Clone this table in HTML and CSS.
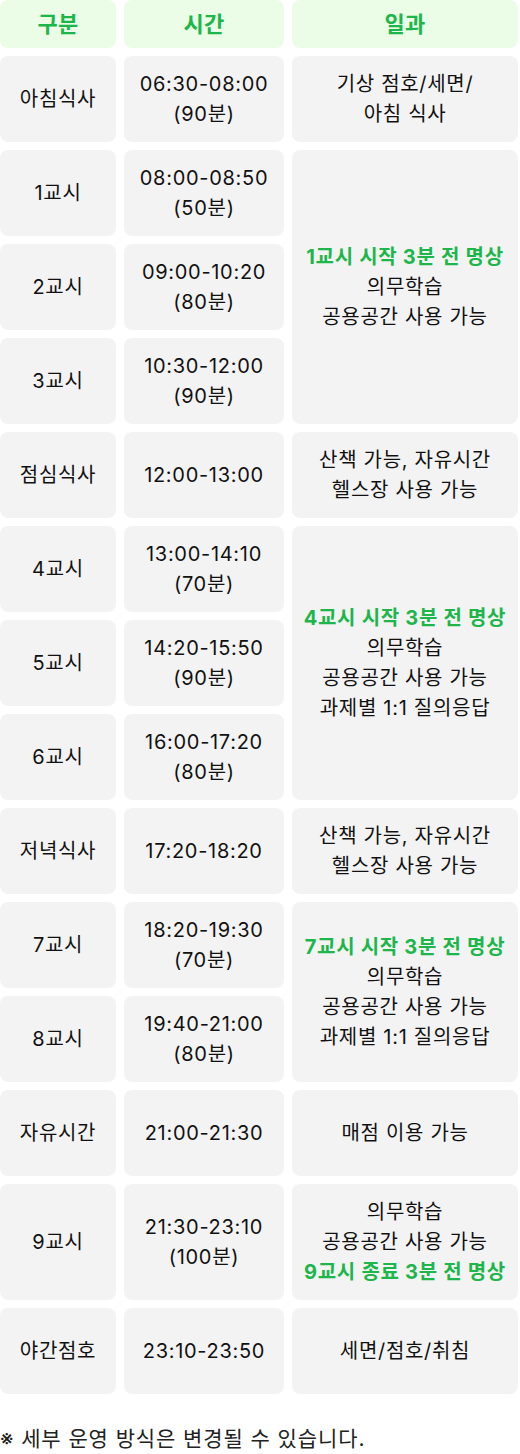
FILE: index.html
```html
<!DOCTYPE html>
<html lang="ko">
<head>
<meta charset="utf-8">
<link rel="stylesheet" href="styles.css">
</head>
<body>
<div class="table">
  <div class="cell head"><p>구분</p></div>
  <div class="cell head"><p>시간</p></div>
  <div class="cell head"><p>일과</p></div>

  <div class="cell"><p>아침식사</p></div>
  <div class="cell"><p>06:30-08:00<br>(90분)</p></div>
  <div class="cell"><p>기상 점호/세면/<br>아침 식사</p></div>

  <div class="cell"><p>1교시</p></div>
  <div class="cell"><p>08:00-08:50<br>(50분)</p></div>
  <div class="cell span3"><p><span class="hl">1교시 시작 3분 전 명상</span><br>의무학습<br>공용공간 사용 가능</p></div>

  <div class="cell"><p>2교시</p></div>
  <div class="cell"><p>09:00-10:20<br>(80분)</p></div>

  <div class="cell"><p>3교시</p></div>
  <div class="cell"><p>10:30-12:00<br>(90분)</p></div>

  <div class="cell"><p>점심식사</p></div>
  <div class="cell"><p>12:00-13:00</p></div>
  <div class="cell"><p>산책 가능, 자유시간<br>헬스장 사용 가능</p></div>

  <div class="cell"><p>4교시</p></div>
  <div class="cell"><p>13:00-14:10<br>(70분)</p></div>
  <div class="cell span3"><p><span class="hl">4교시 시작 3분 전 명상</span><br>의무학습<br>공용공간 사용 가능<br>과제별 1:1 질의응답</p></div>

  <div class="cell"><p>5교시</p></div>
  <div class="cell"><p>14:20-15:50<br>(90분)</p></div>

  <div class="cell"><p>6교시</p></div>
  <div class="cell"><p>16:00-17:20<br>(80분)</p></div>

  <div class="cell"><p>저녁식사</p></div>
  <div class="cell"><p>17:20-18:20</p></div>
  <div class="cell"><p>산책 가능, 자유시간<br>헬스장 사용 가능</p></div>

  <div class="cell"><p>7교시</p></div>
  <div class="cell"><p>18:20-19:30<br>(70분)</p></div>
  <div class="cell span2"><p><span class="hl">7교시 시작 3분 전 명상</span><br>의무학습<br>공용공간 사용 가능<br>과제별 1:1 질의응답</p></div>

  <div class="cell"><p>8교시</p></div>
  <div class="cell"><p>19:40-21:00<br>(80분)</p></div>

  <div class="cell"><p>자유시간</p></div>
  <div class="cell"><p>21:00-21:30</p></div>
  <div class="cell"><p>매점 이용 가능</p></div>

  <div class="cell"><p>9교시</p></div>
  <div class="cell"><p>21:30-23:10<br>(100분)</p></div>
  <div class="cell"><p>의무학습<br>공용공간 사용 가능<br><span class="hl">9교시 종료 3분 전 명상</span></p></div>

  <div class="cell"><p>야간점호</p></div>
  <div class="cell"><p>23:10-23:50</p></div>
  <div class="cell"><p>세면/점호/취침</p></div>
</div>
<p class="note">※ 세부 운영 방식은 변경될 수 있습니다.</p>
</body>
</html>
```

FILE: styles.css
```css
html, body {
  margin: 0;
  padding: 0;
  background: #ffffff;
}
body {
  font-family: Inter, "Noto Sans CJK KR", sans-serif;
  color: #111111;
  width: 518px;
}
.table {
  display: grid;
  grid-template-columns: 116px 160px 226px;
  grid-template-rows: 48px repeat(12, 86px) 116px 86px;
  gap: 8px;
}
.cell {
  background: #f3f3f3;
  border-radius: 8px;
  display: flex;
  align-items: center;
  justify-content: center;
  text-align: center;
  font-size: 20px;
  line-height: 30px;
  letter-spacing: 0.7px;
}
.cell p {
  margin: 0;
  white-space: nowrap;
}
.head {
  background: #ebfde6;
  color: #1db64b;
  font-weight: 700;
  font-size: 22px;
  letter-spacing: 0.3px;
}
.span3 { grid-row: span 3; }
.span2 { grid-row: span 2; }
.hl {
  color: #1db64b;
  font-weight: 700;
}
.note {
  margin: 30px 0 0 0;
  font-size: 21px;
  line-height: 30px;
  color: #222222;
  letter-spacing: 0.9px;
}
```
